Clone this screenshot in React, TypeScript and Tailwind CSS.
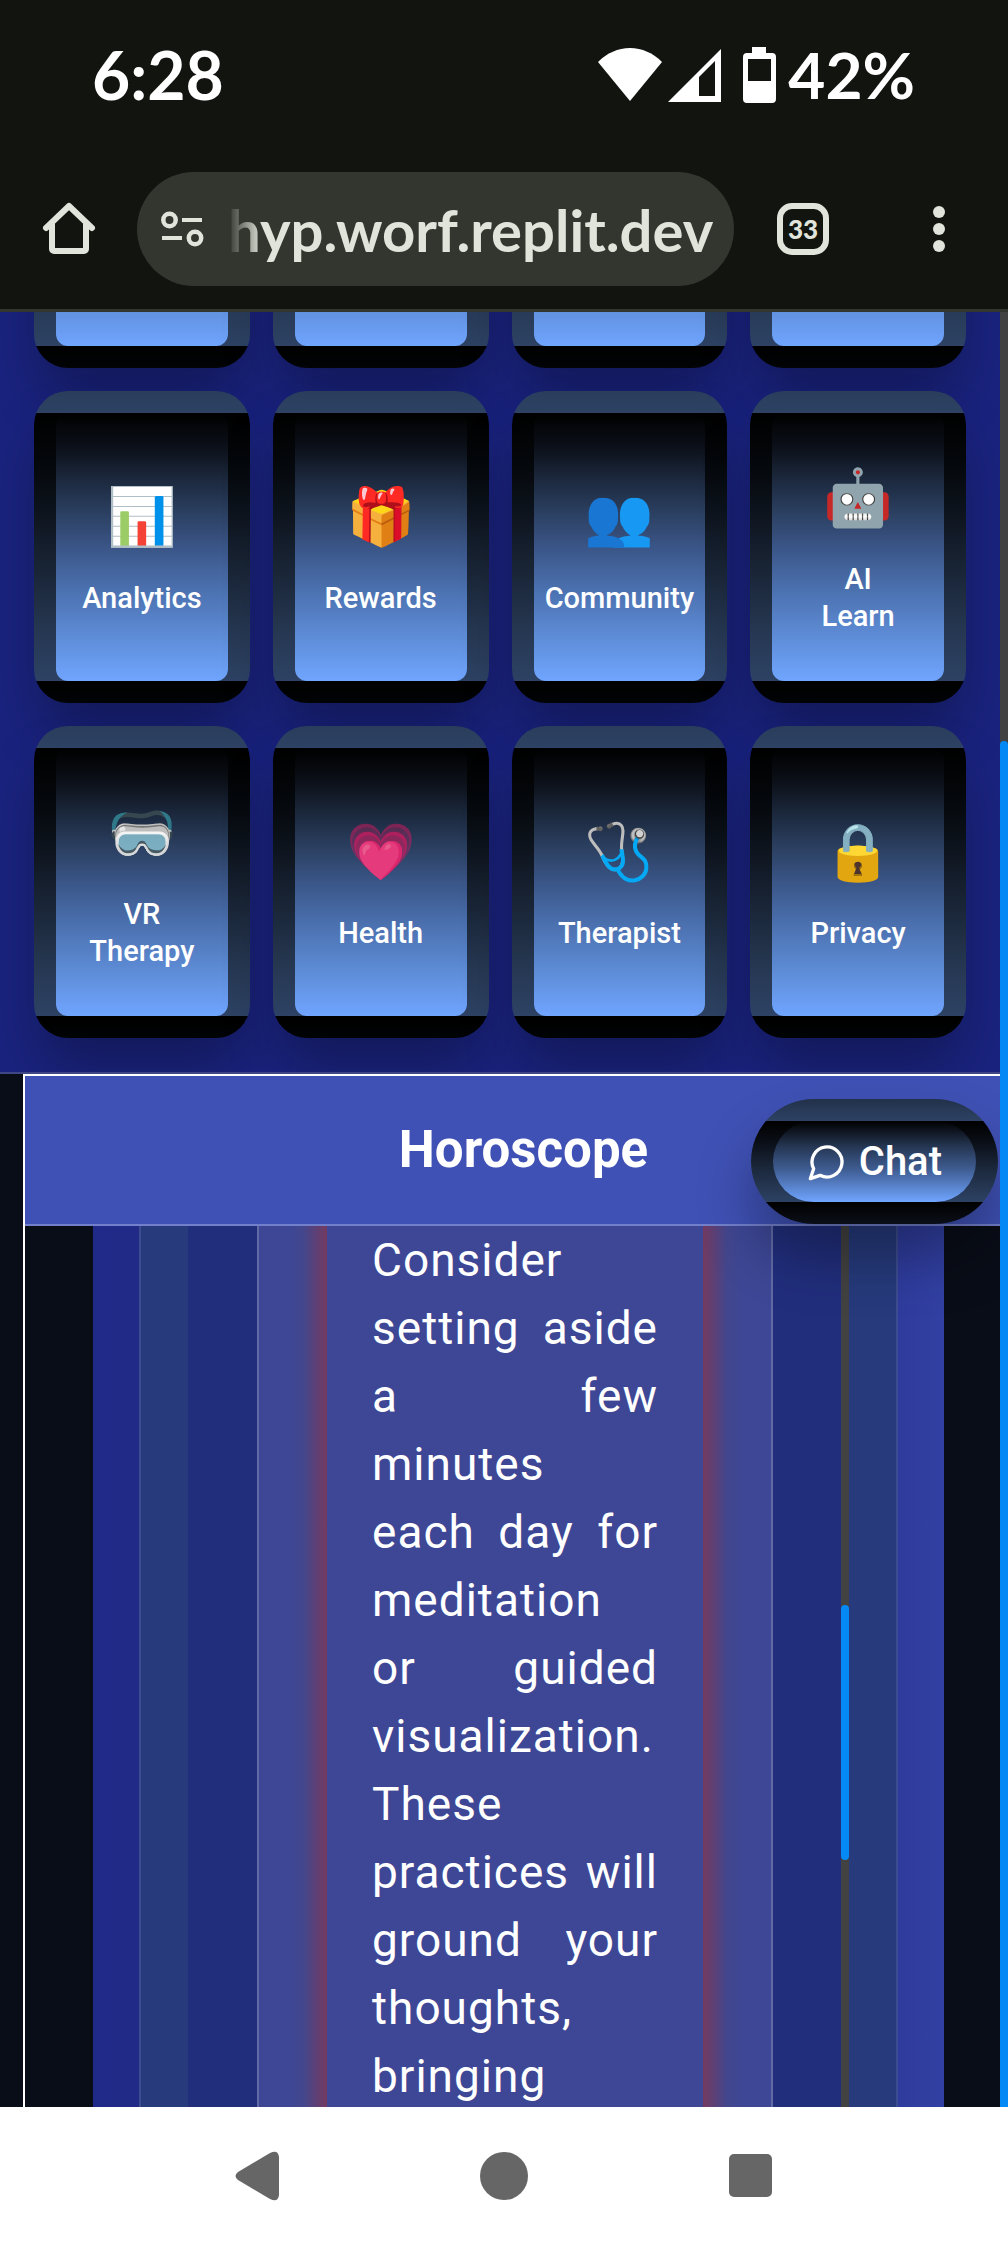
import React from "react";

const cardFrame =
  "border-[22px] border-transparent bg-[linear-gradient(to_bottom,#000_0%,#05080c_20%,#0c121b_35%,#1a2638_60%,#253650_80%,#2d4264_100%)] shadow-[0_34px_56px_-8px_rgba(0,0,0,0.3)]";
const cardFace =
  "bg-[linear-gradient(to_bottom,#000_0%,#0b0f17_12%,#1c293e_25%,#2c4163_38%,#3a5587_50%,#4a6fad_65%,#5c8ad3_82%,#70a5ff_100%)]";

type Tile = { icon: string; label: string };

const tiles: Tile[] = [
  { icon: "📊", label: "Analytics" },
  { icon: "🎁", label: "Rewards" },
  { icon: "👥", label: "Community" },
  { icon: "🤖", label: "AI\nLearn" },
  { icon: "🥽", label: "VR\nTherapy" },
  { icon: "💗", label: "Health" },
  { icon: "🩺", label: "Therapist" },
  { icon: "🔒", label: "Privacy" },
];

function TileFrame({ children }: { children?: React.ReactNode }) {
  return (
    <div className={`h-[312px] rounded-[34px] ${cardFrame}`}>
      <div className={`h-full rounded-[12px] ${cardFace}`}>{children}</div>
    </div>
  );
}

function TileButton({ icon, label }: Tile) {
  return (
    <TileFrame>
      <button
        type="button"
        className="flex h-full w-full flex-col items-center justify-center gap-7 pt-1 text-[29px] leading-[37px] font-medium text-white"
      >
        <span aria-hidden="true" className="text-[56px] leading-[70px]">
          {icon}
        </span>
        <span className="whitespace-pre-line">{label}</span>
      </button>
    </TileFrame>
  );
}

function StatusBar() {
  return (
    <div className="flex h-[149px] items-center justify-between pr-[93px] pl-[92px] font-[Lato,sans-serif] text-[64px] leading-none font-bold text-white">
      <span className="text-[66px]">6:28</span>
      <div className="flex items-center">
        <svg width="124" height="56" viewBox="0 0 124 56" fill="#fff" aria-label="Wi-Fi and signal">
          <path d="M0 15C9 6 20 1 32 1s23 5 32 14L32 54Z" />
          <path fillRule="evenodd" d="M70 55 123 2v53ZM101 30v19h16V14Z" />
        </svg>
        <svg className="mr-3 ml-[21px]" width="33" height="56" viewBox="0 0 33 56" fill="#fff" aria-label="Battery">
          <path
            fillRule="evenodd"
            d="M9 0h14v6h6a4 4 0 0 1 4 4v42a4 4 0 0 1-4 4H4a4 4 0 0 1-4-4V10a4 4 0 0 1 4-4h5ZM5 12v22h23V12Z"
          />
        </svg>
        <span>42%</span>
      </div>
    </div>
  );
}

function Toolbar() {
  return (
    <div className="flex h-40 items-center pl-[42px] text-[#e1e4db]">
      <button type="button" aria-label="Home" className="shrink-0">
        <svg width="54" height="54" viewBox="0 0 54 54" fill="none" stroke="currentColor" strokeWidth="6">
          <path d="M4 26 27 4l23 22" strokeLinecap="round" strokeLinejoin="round" />
          <path d="M10 22v25a2 2 0 0 0 2 2h30a2 2 0 0 0 2-2V22" />
        </svg>
      </button>
      <div className="ml-[41px] flex h-[114px] min-w-0 flex-1 items-center rounded-full bg-[#33362f] pr-4 pl-6">
        <svg
          className="shrink-0"
          width="43"
          height="38"
          viewBox="0 0 43 38"
          fill="none"
          stroke="currentColor"
          aria-hidden="true"
        >
          <circle cx="8.500" cy="10" r="6.200" strokeWidth="4.500" />
          <path d="M21 10h20M1 28h20" strokeWidth="4" />
          <circle cx="34" cy="28" r="6.200" strokeWidth="4.500" />
        </svg>
        <input
          aria-label="Address"
          defaultValue="hyp.worf.replit.dev"
          className="ml-6 h-20 min-w-0 flex-1 bg-transparent font-[Lato,sans-serif] text-[58px] font-bold outline-none [mask-image:linear-gradient(to_right,transparent,#000_34px)]"
        />
      </div>
      <button
        type="button"
        aria-label="Tabs"
        className="ml-[43px] flex size-[52px] shrink-0 items-center justify-center rounded-[15px] border-6 border-current font-[Lato,sans-serif] text-[26px] leading-none font-black"
      >
        33
      </button>
      <button type="button" aria-label="Menu" className="mr-[63px] ml-[104px] shrink-0">
        <svg width="12" height="46" viewBox="0 0 12 46" fill="currentColor">
          <circle cx="6" cy="6" r="6" />
          <circle cx="6" cy="23" r="6" />
          <circle cx="6" cy="40" r="6" />
        </svg>
      </button>
    </div>
  );
}

function ChatButton() {
  return (
    <button
      type="button"
      className="absolute top-[25px] right-[2px] z-10 rounded-full border-[22px] border-transparent bg-[linear-gradient(to_bottom,#000,#0a0e16_25%,#1c293d_60%,#2d4264)] shadow-[0_34px_56px_rgba(0,0,0,0.3)]"
    >
      <span className="flex h-[81px] items-center gap-3 rounded-full bg-[linear-gradient(to_bottom,#000,#24344f_30%,#3f5d93_60%,#70a5ff)] px-[34px] text-[40px] font-medium text-white">
        <svg
          width="40"
          height="40"
          viewBox="0 0 24 24"
          fill="none"
          stroke="currentColor"
          strokeWidth="2"
          strokeLinecap="round"
          strokeLinejoin="round"
          aria-hidden="true"
        >
          <path d="M7.900 20A9 9 0 1 0 4 16.100L2 22Z" />
        </svg>
        Chat
      </span>
    </button>
  );
}

function Horoscope() {
  return (
    <section className="relative flex min-h-0 flex-1 flex-col bg-[#090d17] pl-[23px]">
      <div className="-mr-6 flex min-h-0 flex-1 flex-col border-2 border-b-0 border-white">
        <h2 className="flex h-[150px] shrink-0 items-center justify-center border-b-2 border-[#7280cb] bg-[#3f51b5] text-[51px] leading-[60px] font-bold text-white">
          Horoscope
        </h2>
        <div className="flex min-h-0 flex-1 pr-[78px] pl-[68px]">
          <div className="flex flex-1 bg-[linear-gradient(to_right,#202a88,#232a86_8%,#2d3a9a_92%,#3240a3)] px-[46px]">
            <div className="flex flex-1 border-x-2 border-[#3c4c90] bg-[#263a7c] px-[47px]">
              <div className="flex flex-1 bg-[#212e7c] pl-[69px]">
                <div className="min-w-0 flex-1 border-x-2 border-[#616aa5] bg-[linear-gradient(to_right,#3d4795_30px,#44468c_45px,#743a60_68px,#3d4795_68px,#3d4795_calc(100%-68px),#743a60_calc(100%-68px),#44468c_calc(100%-45px),#3d4795_calc(100%-30px))] px-[113px]">
                  <p className="text-justify text-[46px] leading-[68px] tracking-[1px] text-white">
                    Consider setting aside a few minutes each day for meditation or guided visualization. These
                    practices will ground your thoughts, bringing
                  </p>
                </div>
                <div className="ml-[68px] w-2 bg-[#424242] pt-[379px]">
                  <div className="h-[255px] rounded-full bg-[#058af5]" />
                </div>
              </div>
            </div>
          </div>
        </div>
      </div>
      <ChatButton />
    </section>
  );
}

function NavBar() {
  return (
    <nav className="grid h-[137px] shrink-0 grid-cols-3 items-center justify-items-center bg-white px-[134px] text-[#666]">
      <button type="button" aria-label="Back">
        <svg width="44" height="50" viewBox="0 0 44 50" fill="currentColor">
          <path d="M3 21 35 2q8-4 9 4v38q-1 8-9 4L3 29q-5-4 0-8Z" />
        </svg>
      </button>
      <button type="button" aria-label="Home screen" className="size-12 rounded-full bg-current" />
      <button type="button" aria-label="Recent apps" className="size-[43px] rounded-[5px] bg-current" />
    </nav>
  );
}

export default function App() {
  return (
    <div className="flex h-screen flex-col overflow-hidden bg-[#11140f] font-[Roboto,sans-serif]">
      <header className="shrink-0 border-b-3 border-[#33362f]">
        <StatusBar />
        <Toolbar />
      </header>
      <main className="flex min-h-0 flex-1 overflow-hidden">
        <div className="flex min-w-0 flex-1 flex-col overflow-hidden">
          <section className="-mt-[256px] grid shrink-0 grid-cols-4 gap-[23px] overflow-hidden border-b-2 border-[#3f4685] bg-[#1a237e] px-[34px] pb-[34px]">
            {[0, 1, 2, 3].map((n) => (
              <TileFrame key={n} />
            ))}
            {tiles.map((tile) => (
              <TileButton key={tile.label} {...tile} />
            ))}
          </section>
          <Horoscope />
        </div>
        <div className="flex w-2 flex-col bg-[#424242] pt-[429px]">
          <div className="flex-1 rounded-t-full bg-[#058af5]" />
        </div>
      </main>
      <NavBar />
    </div>
  );
}
